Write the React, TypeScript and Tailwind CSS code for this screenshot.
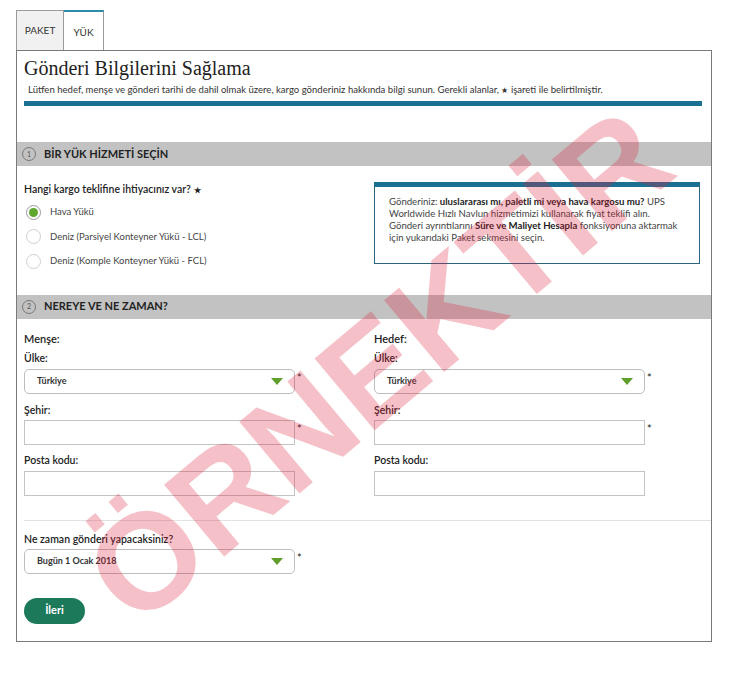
import React from "react";

const font = { fontFamily: "Lato, 'Noto Sans', sans-serif" };

function Arrow() {
  return (
    <svg width="12" height="7" viewBox="0 0 12 7" className="shrink-0">
      <polygon points="0,0 12,0 6,7" fill="#5e9e2c" />
    </svg>
  );
}

function SelectBox({ value }: { value: string }) {
  return (
    <div className="flex items-center">
      <div className="flex h-[25px] w-[271px] items-center justify-between rounded-[5px] border border-[#bdbdbd] bg-white pl-[12px] pr-[11px]">
        <span className="text-[9px] font-bold text-[#333]">{value}</span>
        <Arrow />
      </div>
      <span className="ml-[2px] -mt-[6px] text-[11px] text-[#222]">*</span>
    </div>
  );
}

function TextBox({ star }: { star?: boolean }) {
  return (
    <div className="flex items-center">
      <div className="h-[25px] w-[271px] border border-[#c4c4c4] bg-white" />
      {star && <span className="ml-[2px] -mt-[6px] text-[11px] text-[#222]">*</span>}
    </div>
  );
}

function Label({ children, className = "" }: { children: React.ReactNode; className?: string }) {
  return <div className={`text-[10.5px] font-semibold text-[#222] leading-[12px] ${className}`}>{children}</div>;
}

function Column({ title }: { title: string }) {
  return (
    <div className="flex flex-col">
      <Label className="mt-[14px] text-[11px]">{title}</Label>
      <Label className="mt-[7px]">Ülke:</Label>
      <div className="mt-[5px]">
        <SelectBox value="Türkiye" />
      </div>
      <Label className="mt-[10px]">Şehir:</Label>
      <div className="mt-[4px]">
        <TextBox star />
      </div>
      <Label className="mt-[9px]">Posta kodu:</Label>
      <div className="mt-[5px]">
        <TextBox />
      </div>
    </div>
  );
}

function SectionHeader({ n, title }: { n: string; title: string }) {
  return (
    <div className="flex h-[24px] items-center bg-[#c2c2c2] pl-[5px]">
      <div className="flex h-[14px] w-[14px] items-center justify-center rounded-full border border-[#777] text-[7px] text-[#555]">
        {n}
      </div>
      <span className="ml-[8px] text-[11px] font-bold text-[#222]">{title}</span>
    </div>
  );
}

function Radio({ checked, label }: { checked?: boolean; label: string }) {
  return (
    <div className="flex h-[24.5px] items-center">
      <div
        className={`flex h-[15px] w-[15px] items-center justify-center rounded-full border ${
          checked ? "border-[#9a9a9a]" : "border-[#cfcfcf]"
        } bg-white`}
      >
        {checked && <div className="h-[9px] w-[9px] rounded-full bg-[#5fa72c]" />}
      </div>
      <span className="ml-[9px] text-[9.5px] text-[#444]">{label}</span>
    </div>
  );
}

export default function App() {
  return (
    <div className="relative h-[678px] w-[739px] overflow-hidden bg-white" style={font}>
      <div className="flex pl-[16px] pt-[10px]">
        <div className="flex h-[40px] w-[48px] items-center justify-center border border-b-0 border-[#9a9a9a] bg-[#f1f1f1] text-[10px] text-[#333]">
          PAKET
        </div>
        <div className="flex h-[40px] w-[40px] items-center justify-center border-r border-t-2 border-r-[#9a9a9a] border-t-[#2a8ca6] bg-white pt-[3px] text-[10px] text-[#333]">
          YÜK
        </div>
      </div>
      <div className="ml-[16px] h-[592px] w-[696px] border border-[#7a7a7a]">
        <div className="px-[7px]">
          <div
            className="mt-[5px] text-[20px] leading-[24px] text-[#222]"
            style={{ fontFamily: "'Liberation Serif', 'DejaVu Serif', serif" }}
          >
            Gönderi Bilgilerini Sağlama
          </div>
          <div className="mt-[4px] pl-[4px] text-[9.55px] leading-[12px] text-[#333]">
            Lütfen hedef, menşe ve gönderi tarihi de dahil olmak üzere, kargo gönderiniz hakkında bilgi sunun. Gerekli alanlar,{" "}
            <span className="text-[8px]">★</span> işareti ile belirtilmiştir.
          </div>
          <div className="mt-[5px] h-[5px] w-[678px] bg-[#1b6f93]" />
        </div>

        <div className="mt-[36px]">
          <SectionHeader n="1" title="BİR YÜK HİZMETİ SEÇİN" />
        </div>

        <div className="flex px-[7px]">
          <div className="w-[350px]">
            <Label className="mt-[17px]">
              Hangi kargo teklifine ihtiyacınız var? <span className="text-[8px]">★</span>
            </Label>
            <div className="mt-[4px] pl-[2px]">
              <Radio checked label="Hava Yükü" />
              <Radio label="Deniz (Parsiyel Konteyner Yükü - LCL)" />
              <Radio label="Deniz (Komple Konteyner Yükü - FCL)" />
            </div>
          </div>
          <div className="mt-[16px] h-[82px] w-[326px] border border-t-[5px] border-[#2c6480] border-t-[#1b6f93] px-[14px] pt-[9px] text-[9.6px] leading-[12px] text-[#444]">
            Gönderiniz: <b className="text-[#222]">uluslararası mı, paletli mi veya hava kargosu mu?</b> UPS Worldwide Hızlı Navlun
            hizmetimizi kullanarak fiyat teklifi alın. Gönderi ayrıntılarını{" "}
            <b className="text-[#222]">Süre ve Maliyet Hesapla</b> fonksiyonuna aktarmak için yukarıdaki Paket sekmesini seçin.
          </div>
        </div>

        <div className="mt-[21px]">
          <SectionHeader n="2" title="NEREYE VE NE ZAMAN?" />
        </div>

        <div className="grid grid-cols-[350px_1fr] px-[7px]">
          <Column title="Menşe:" />
          <Column title="Hedef:" />
        </div>

        <div className="ml-[7px] mt-[24px] h-px bg-[#e2e2e2]" />

        <div className="px-[7px]">
          <Label className="mt-[12px]">Ne zaman gönderi yapacaksiniz?</Label>
          <div className="mt-[4px]">
            <SelectBox value="Bugün 1 Ocak 2018" />
          </div>
          <button className="mt-[24px] flex h-[26px] w-[61px] items-center justify-center rounded-full bg-[#1c7a5b] text-[11px] font-bold text-white">
            İleri
          </button>
        </div>
      </div>

      <div className="pointer-events-none absolute left-[378px] top-[366px] -translate-x-1/2 -translate-y-1/2 -rotate-[40deg] whitespace-nowrap">
        <span
          className="text-[136px] font-bold leading-none text-[#e0203c] opacity-[0.28]"
          style={{ fontFamily: "'Liberation Sans', Arial, sans-serif" }}
        >
          ÖRNEKTİR
        </span>
      </div>
    </div>
  );
}
